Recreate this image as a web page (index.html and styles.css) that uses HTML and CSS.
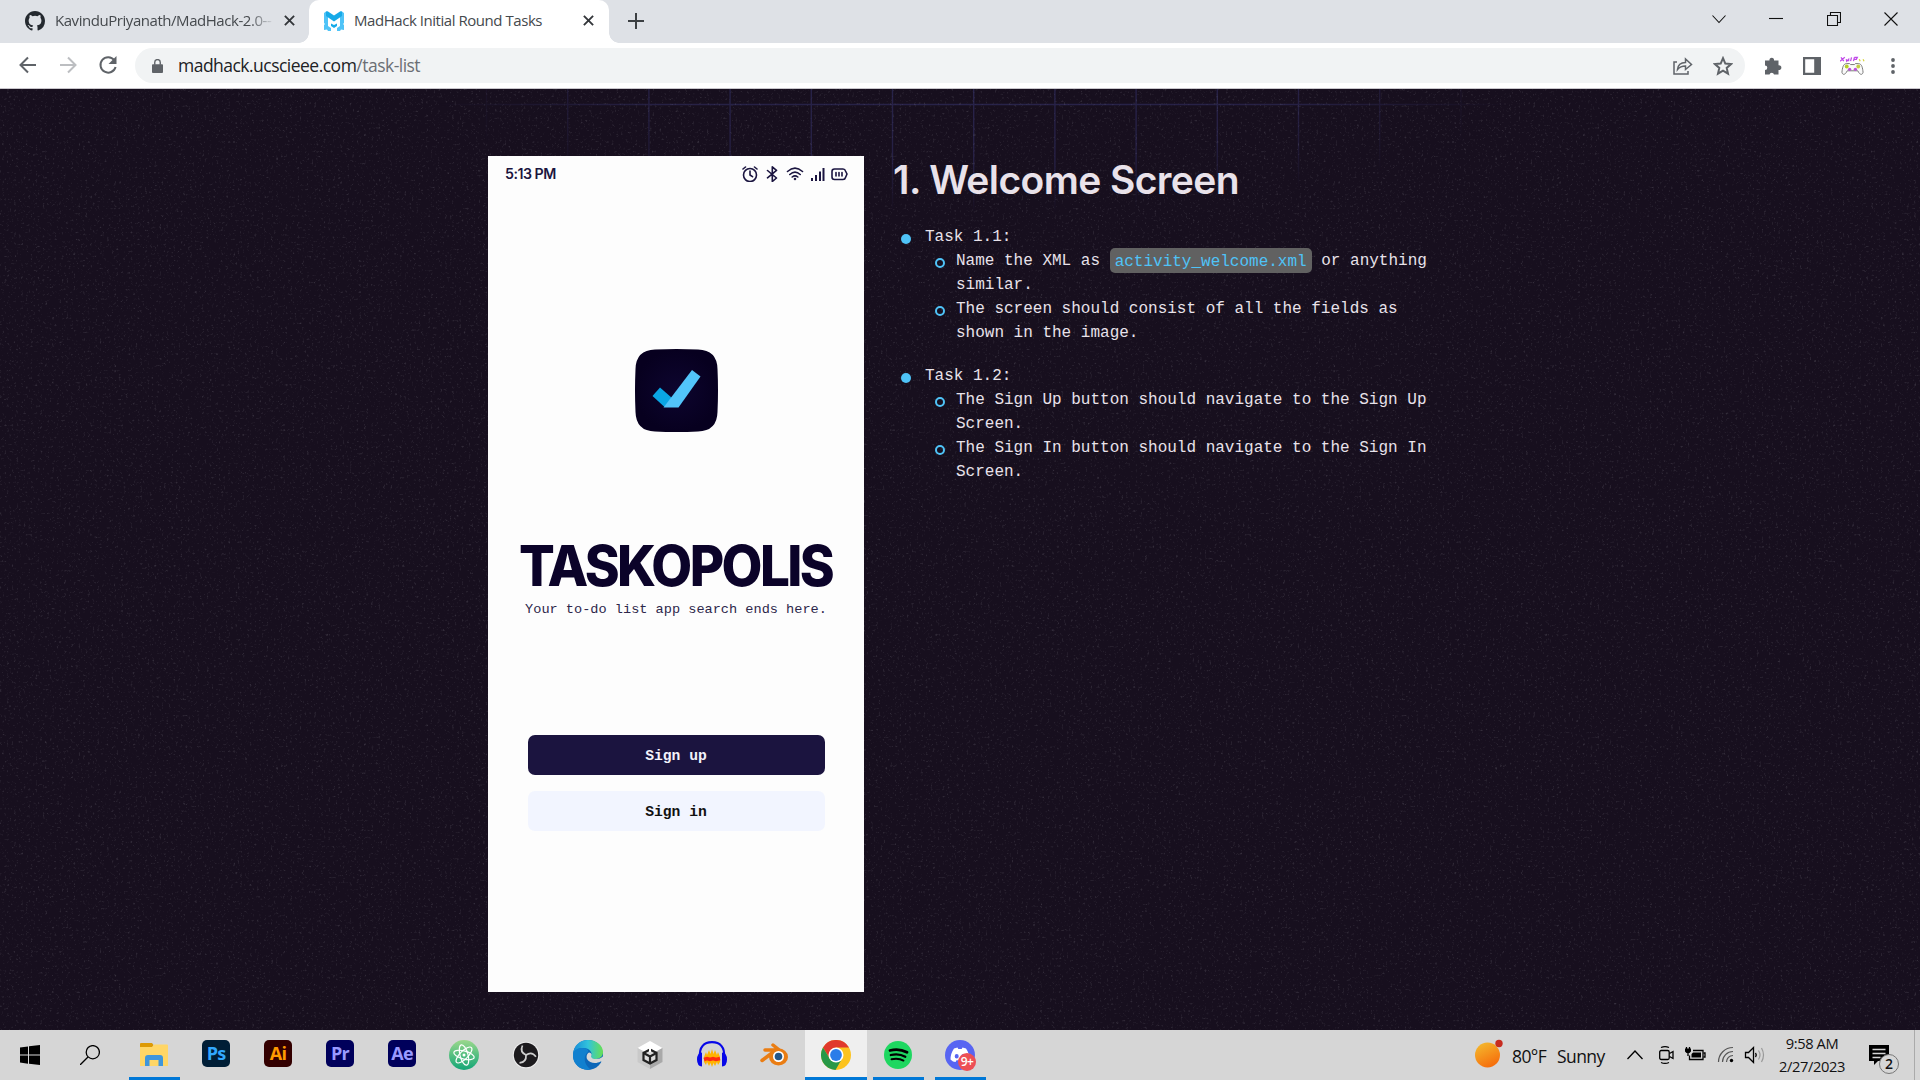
FILE: index.html
```
<!DOCTYPE html>
<html lang="en">
<head>
<meta charset="utf-8">
<title>MadHack Initial Round Tasks</title>
<link rel="stylesheet" href="styles.css">
</head>
<body>
<header class="browser">
  <div class="tabstrip">
    <div class="tab tab-idle">
      <svg class="fav" viewBox="0 0 16 16"><path fill="#24292f" d="M8 0C3.58 0 0 3.58 0 8c0 3.54 2.29 6.53 5.47 7.59.4.07.55-.17.55-.38v-1.49c-2.01.37-2.53-.49-2.69-.94-.09-.23-.48-.94-.82-1.13-.28-.15-.68-.52-.01-.53.63-.01 1.08.58 1.23.82.72 1.21 1.87.87 2.33.66.07-.52.28-.87.51-1.07-1.78-.2-3.64-.89-3.64-3.95 0-.87.31-1.59.82-2.15-.08-.2-.36-1.02.08-2.12 0 0 .67-.21 2.2.82a7.4 7.4 0 0 1 4 0c1.53-1.04 2.2-.82 2.2-.82.44 1.1.16 1.92.08 2.12.51.56.82 1.27.82 2.15 0 3.07-1.87 3.75-3.65 3.95.29.25.54.73.54 1.48v2.19c0 .21.15.46.55.38A8 8 0 0 0 16 8c0-4.42-3.58-8-8-8z"/></svg>
      <span class="tab-title faded">KavinduPriyanath/MadHack-2.0--</span>
      <svg class="tab-x" viewBox="0 0 10 10"><path d="M.8.8l8.4 8.4M9.2.8L.8 9.2"/></svg>
    </div>
    <div class="tab tab-active">
      <svg class="fav" viewBox="0 0 20 20"><path fill="#4fc3f7" d="M0 2l2-1.500h2V15l3 2v3H4l-1-1.500L0 19V14l1-1-1-1zM20 2l-2-1.500h-2V15l-3 2v3h3l1-1.500 3 .5v-5l-1-1 1-1z"/><path fill="#16aae8" d="M2 .5h2L10 4.500 16 .5h2V5l-8 5.500L2 5z"/><path fill="#16aae8" d="M7 12.500l3 1.500 3-1.500v2.500l-3 2-3-2z"/></svg>
      <span class="tab-title">MadHack Initial Round Tasks</span>
      <svg class="tab-x" viewBox="0 0 10 10"><path d="M.8.8l8.4 8.4M9.2.8L.8 9.2"/></svg>
    </div>
    <svg class="plus" viewBox="0 0 16 16"><path d="M8 0v16M0 8h16"/></svg>
    <div class="winctl">
      <svg viewBox="0 0 14 14"><path d="M.5 3.500l6.500 7 6.500-7"/></svg>
      <svg viewBox="0 0 14 14"><path d="M0 6.500h14"/></svg>
      <svg viewBox="0 0 14 14"><path d="M.5 3.500h10v10h-10zM3.500 3V.5h10v10H11"/></svg>
      <svg viewBox="0 0 14 14"><path d="M.5.5l13 13M13.500.5l-13 13"/></svg>
    </div>
  </div>
  <div class="toolbar">
    <div class="nav">
      <svg viewBox="0 0 20 20"><path d="M18 10H3M10 2.500L2.500 10l7.500 7.500"/></svg>
      <svg class="off" viewBox="0 0 20 20"><path d="M2 10h15M10 2.500l7.500 7.500-7.500 7.500"/></svg>
      <svg viewBox="0 0 20 20"><path d="M16.300 5.200A7.700 7.700 0 1 0 17.600 12"/><path class="solid" d="M18.500 1v8h-8z"/></svg>
    </div>
    <div class="omnibox">
      <svg class="lock" viewBox="0 0 12 15"><path fill="#5f6368" d="M1 5.500h10a1 1 0 0 1 1 1V14a1 1 0 0 1-1 1H1a1 1 0 0 1-1-1V6.500a1 1 0 0 1 1-1z"/><path fill="none" stroke="#5f6368" stroke-width="1.500" d="M3 6V3.500a3 3 0 0 1 6 0V6"/></svg>
      <span class="url">madhack.ucscieee.com<span class="path">/task-list</span></span>
      <svg class="share" viewBox="0 0 20 18"><path d="M4 5H1v12h14v-3M4.500 12.500c.5-5 3.500-7 8-7V2l6 5.500-6 5V9c-4 0-6 1-8 3.500z"/></svg>
      <svg class="star" viewBox="0 0 20 20"><path d="M10 2.200l2.300 5.400 5.700.5-4.300 3.800 1.300 5.700-5-3-5 3 1.300-5.700L2 8.100l5.700-.5z"/></svg>
    </div>
    <div class="exts">
      <svg class="puzzle" viewBox="0 0 18 18"><path fill="#5f6368" d="M1 3.500h4.500a2.300 2.300 0 1 1 4.500 0h4.500v4.800a2.400 2.400 0 1 1 0 4.700v4.500H10a2.300 2.300 0 0 0-4.500 0H1V13a2.300 2.300 0 0 0 0-4.600z"/></svg>
      <svg class="panel" viewBox="0 0 18 18"><path fill="#5f6368" fill-rule="evenodd" d="M0 0h18v18H0zM2.200 2.200v13.600h9V2.200z"/></svg>
      <svg class="pad" viewBox="0 0 26 20"><path fill="none" stroke="#c04ae8" stroke-width="1.300" d="M1 1l3 4M5 1L0 5M6.500 3l.5 2 2-2v2M12 1l-1 4M15 1l-1 4M15 1h3l-1 2h-2"/><path fill="none" stroke="#d9d640" stroke-width="1.300" d="M20 3l1 2M24 3l1 2"/><path fill="#fafafa" stroke="#777" d="M7 7.500h3l1 1h4l1-1h3c4 0 4.500 5 5 9-1 4-4 2-5.500-1.500h-11C6 18.500 3 20.500 2 16.500c.5-4 1-9 5-9z"/><circle cx="7" cy="10.500" r="2" fill="#b8cd27"/><circle cx="19" cy="10.500" r="2" fill="#c2cb46"/><circle cx="10" cy="13.500" r="1.700" fill="#bb52d6"/><circle cx="16" cy="13.500" r="1.700" fill="#bb52d6"/></svg>
      <svg class="dots" viewBox="0 0 4 16"><g fill="#5f6368"><circle cx="2" cy="2" r="1.900"/><circle cx="2" cy="8" r="1.900"/><circle cx="2" cy="14" r="1.900"/></g></svg>
    </div>
  </div>
</header>

<main class="page">
  <svg class="backdrop" width="1920" height="941">
    <defs>
      <filter id="grain" x="0" y="0" width="100%" height="100%"><feTurbulence type="fractalNoise" baseFrequency=".42" numOctaves="2" seed="4"/><feColorMatrix values="0 0 0 0 .5  0 0 0 0 .5  0 0 0 0 .54  1.800 0 0 0 -1.080"/></filter>
      <radialGradient id="fade" gradientUnits="userSpaceOnUse" cx="0" cy="0" r="1" gradientTransform="translate(974 0) scale(540 125)"><stop offset="0" stop-color="#fff"/><stop offset=".6" stop-color="#fff" stop-opacity=".85"/><stop offset="1" stop-color="#fff" stop-opacity="0"/></radialGradient>
      <mask id="gridmask" maskUnits="userSpaceOnUse" x="0" y="0" width="1920" height="130"><rect width="1920" height="130" fill="url(#fade)"/></mask>
    </defs>
    <path mask="url(#gridmask)" fill="none" stroke="#29244b" stroke-width="1.400" d="M400 15.500H1540M486.500 0V130M567.700 0V130M648.900 0V130M730.100 0V130M811.300 0V130M892.500 0V130M973.700 0V130M1054.900 0V130M1136.100 0V130M1217.300 0V130M1298.500 0V130M1379.700 0V130M1461 0V130"/>
    <rect width="1920" height="941" filter="url(#grain)" opacity=".34"/>
  </svg>
  <section class="phone">
    <div class="status">
      <span class="time">5:13 PM</span>
      <svg class="sicons" viewBox="0 0 106 16"><g fill="none" stroke="#1b1540" stroke-width="1.600" stroke-linecap="round" stroke-linejoin="round"><circle cx="8" cy="9" r="6.500"/><path d="M8 5v4l2.500 1.700M1 3l2.500-2M15 3l-2.500-2M25.500 4.500l9 7.500-4.200 3.500V.8l4.200 3.600-9 7.400M45.500 5.500q7.500-6.600 15 0M47.800 8.500q5.200-4.600 10.400 0M50.200 11q2.800-2.300 5.600 0"/><circle cx="53" cy="13" r=".5"/><path stroke-width="2" stroke-linecap="butt" d="M70 15v-3M74 15V9M78 15V5.500M81.500 15V2"/><path d="M92.500 3H101q2 0 2.500 2l1.500 3-1.500 3.500q-.5 2-2.500 2h-8.500Q90 13.500 90 11V5.500Q90 3 92.500 3z"/><path d="M94 6.500V10M97 6.500V10M100 6.500V10"/></g></svg>
    </div>
    <svg class="logo" viewBox="0 0 83 83"><defs><radialGradient id="lg"><stop stop-color="#0d052f"/><stop offset="1" stop-color="#07001f"/></radialGradient></defs><path fill="url(#lg)" d="M20 .5Q41.500-.5 63 .5Q82 1 82.500 20Q83.500 41.500 82.500 63Q82 82 63 82.500Q41.500 83.500 20 82.500Q1 82 .5 63Q-.5 41.500 .5 20Q1 1 20 .5z"/><path fill="#0aa6e4" d="M25 38.500l12 10.500-7.500 9L17.500 47z"/><path fill="#52c5fa" d="M57 21l8.500 6.500-22 31H28.500z"/></svg>
    <h2 class="brand">TASKOPOLIS</h2>
    <p class="tagline">Your to-do list app search ends here.</p>
    <div class="btn btn-up">Sign up</div>
    <div class="btn btn-in">Sign in</div>
  </section>
  <section class="tasks">
    <h1>1. Welcome Screen</h1>
    <ul class="outer">
      <li>Task 1.1:
        <ul class="inner">
          <li>Name the XML as <code>activity_welcome.xml</code> or anything<br>similar.</li>
          <li>The screen should consist of all the fields as<br>shown in the image.</li>
        </ul>
      </li>
      <li>Task 1.2:
        <ul class="inner">
          <li>The Sign Up button should navigate to the Sign Up<br>Screen.</li>
          <li>The Sign In button should navigate to the Sign In<br>Screen.</li>
        </ul>
      </li>
    </ul>
  </section>
</main>

<footer class="taskbar">
  <div class="cell start"><svg width="20" height="20" viewBox="0 0 20 20"><path d="M0 2.500l8-1.100v8.100H0zM9 1.300L20 0v9.500H9zM0 10.500h8v8.200l-8-1.100zM9 10.500h11V20L9 18.800z"/></svg></div>
  <div class="cell find"><svg width="20" height="20" viewBox="0 0 20 20"><g fill="none" stroke="#000" stroke-width="1.300"><circle cx="12.800" cy="7.200" r="6.600"/><path d="M8 12l-8 8"/></g></svg></div>
  <div class="cell open"><svg width="28" height="24" viewBox="0 0 28 24"><path fill="#dd9a05" d="M0 1q0-1 1-1h11l1.500 2-1.500 3H0z"/><path fill="#ffd666" d="M0 4h12l2.500-2.500H27q1 0 1 1V23H0z"/><path fill="#3f96dc" d="M5 23V15q0-3 3-3h12q3 0 3 3v8h-4.500v-6h-9v6z"/></svg></div>
  <div class="cell"><span class="adobe ps">Ps</span></div>
  <div class="cell"><span class="adobe ai">Ai</span></div>
  <div class="cell"><span class="adobe pr">Pr</span></div>
  <div class="cell"><span class="adobe ae">Ae</span></div>
  <div class="cell"><svg width="30" height="30" viewBox="0 0 30 30"><defs><linearGradient id="at" x2="0" y2="1"><stop stop-color="#9bd88c"/><stop offset="1" stop-color="#12a676"/></linearGradient></defs><circle cx="15" cy="15" r="15" fill="url(#at)"/><g fill="none" stroke="#fff" stroke-width="1.200"><ellipse cx="15" cy="15" rx="10.500" ry="4" transform="rotate(15 15 15)"/><ellipse cx="15" cy="15" rx="10.500" ry="4" transform="rotate(75 15 15)"/><ellipse cx="15" cy="15" rx="10.500" ry="4" transform="rotate(135 15 15)"/></g><circle cx="15" cy="15" r="1.500" fill="#fff"/></svg></div>
  <div class="cell"><svg width="28" height="28" viewBox="0 0 28 28"><circle cx="14" cy="14" r="13.300" fill="#eee"/><circle cx="14" cy="14" r="12.200" fill="#1d1b1e"/><g fill="none" stroke="#cfcfcf" stroke-width="1.700"><path d="M14 14Q7.500 11 10.500 4.500"/><path d="M14 14Q7.500 11 10.500 4.500" transform="rotate(120 14 14)"/><path d="M14 14Q7.500 11 10.500 4.500" transform="rotate(240 14 14)"/></g></svg></div>
  <div class="cell"><svg width="30" height="30" viewBox="0 0 30 30"><defs><linearGradient id="e1"><stop stop-color="#168bd8"/><stop offset=".5" stop-color="#32c3dc"/><stop offset="1" stop-color="#67e052"/></linearGradient></defs><circle cx="15" cy="15" r="15" fill="#0c67b8"/><path fill="url(#e1)" d="M0 14C1 5 7 0 15 0c9 0 15 6 15 12 0 5-4 7-8 7-3 0-5-1-4-2.500C20 13 17 8 10 8 5 8 1 11 0 14z"/><path fill="#1180cf" d="M0 14c1-4 5-6 9-6 5 0 7 2 6 4-6 5-3 14 3 17.500C8 31.500-1 24 0 14z"/><path fill="#d6d6d6" d="M16 12.500c2 0 3.500 2 2 4 .5 2 2.500 2.500 5 2.500 3 0 5.500-1 7.500-3v6l-3-.5c-4 2.500-11 2-13.500-2.500-1-2.500 0-5.500 2-6.500z"/></svg></div>
  <div class="cell"><svg width="26" height="28" viewBox="0 0 26 28"><path fill="#fff" d="M13 0l12.500 7L13 14 .5 7z"/><path fill="#c9c9c9" d="M.5 7L13 14v14L.5 21z"/><path fill="#a9a9a9" d="M25.500 7L13 14v14l12.500-7z"/><path fill="#ddd" stroke="#222" stroke-width="2.200" d="M13 8.500l6.500 3.500v7L13 22.500 6.500 19v-7z"/><path fill="none" stroke="#222" stroke-width="2.200" d="M6.500 12l6.500 3.500 6.500-3.500M13 15.500v7"/><path stroke="#fff" stroke-width="2" d="M13 5v6"/></svg></div>
  <div class="cell"><svg width="30" height="28" viewBox="0 0 30 28"><path fill="#ffb400" d="M7 16l2-5 1 3 2-5 1.500 4L15 8l1.500 5L18 9l2 5 1-3 2 5v5l-2 3-1-3-2 4-1.500-3L15 26l-1.500-4-1.500 3-2-4-1 3-2-3z"/><path fill="none" stroke="#ff2b12" stroke-width="3.500" d="M7 18.500l3-1 3 1 3-1 3 1 4-1"/><path fill="none" stroke="#0808e8" stroke-width="2.200" d="M3 16C2 6 7 1.200 15 1.200S28 6 27 16"/><path fill="#0808e8" d="M5 11.500v14Q0 25 0 18.500t5-7zM25 11.500v14q5-.5 5-7t-5-7z"/></svg></div>
  <div class="cell"><svg width="28" height="24" viewBox="0 0 28 24"><path fill="none" stroke="#ea7d13" stroke-width="3.500" stroke-linecap="round" stroke-linejoin="round" d="M2 17.500L16 7H5M13 2l10 8"/><ellipse cx="18.500" cy="14" rx="9.500" ry="8.500" fill="#ea7d13"/><circle cx="18.500" cy="13.500" r="5.500" fill="#fff"/><circle cx="18.500" cy="13.500" r="3.800" fill="#265787"/></svg></div>
  <div class="cell current"><svg width="30" height="30" viewBox="0 0 30 30"><circle cx="15" cy="15" r="15" fill="#fcc31e"/><path fill="#e0392c" d="M2 7.500A15 15 0 0 1 28 7.500H15L9 19z"/><path fill="#279847" d="M2 7.500L8.800 18.700 15 22l6-3.200L14.500 30A15 15 0 0 1 2 7.500z"/><circle cx="15" cy="15" r="7.500" fill="#fff"/><circle cx="15" cy="15" r="5.900" fill="#2b7de9"/></svg></div>
  <div class="cell open"><svg width="28" height="28" viewBox="0 0 28 28"><circle cx="14" cy="14" r="14" fill="#1ed760"/><path fill="none" stroke="#000" stroke-linecap="round" stroke-width="2.800" d="M6 9.500q9-2.500 17 1.800"/><path fill="none" stroke="#000" stroke-linecap="round" stroke-width="2.300" d="M6.800 14q8-2 14.500 1.700"/><path fill="none" stroke="#000" stroke-linecap="round" stroke-width="1.900" d="M7.500 18.200q7-1.500 12 1.400"/></svg></div>
  <div class="cell open"><div class="discord"><svg width="30" height="30" viewBox="0 0 30 30"><circle cx="15" cy="15" r="15" fill="#5865f2"/><path fill="#fff" fill-rule="evenodd" d="M9 8.500l3.500-1 .8 1.500h3.400l.8-1.500 3.500 1q3.500 5 3.500 11-2.500 2.500-5 2.500l-1-1.700h-7L10.500 22q-2.500 0-5-2.500 0-6 3.500-11zm2.700 5.500a2 2.200 0 1 0 0 4.400 2 2.200 0 0 0 0-4.400zm6.600 0a2 2.200 0 1 0 0 4.400 2 2.200 0 0 0 0-4.400z"/></svg><span class="nine">9+</span></div></div>
  <div class="tray">
    <svg class="sun" width="28" height="30" viewBox="0 0 28 30"><defs><linearGradient id="sn" x1=".2" x2=".7" y2="1"><stop stop-color="#f4b92e"/><stop offset="1" stop-color="#f66a0a"/></linearGradient></defs><circle cx="12.500" cy="17" r="12.500" fill="url(#sn)"/><circle cx="24" cy="5.500" r="3.700" fill="#c72c20"/></svg>
    <span class="temp">80°F</span><span class="sky">Sunny</span>
    <svg class="up" width="16" height="10" viewBox="0 0 16 10"><path fill="none" stroke="#000" stroke-width="1.300" d="M.5 9L8 1l7.500 8"/></svg>
    <svg class="sys" width="106" height="20" viewBox="0 0 106 20"><g fill="none" stroke="#000" stroke-width="1.300"><rect x=".7" y="5.500" width="9.500" height="9" rx="1.500"/><path d="M10.500 8.500l3.500-2v7l-3.500-2M2 2.500q4-1.800 8 0M2 17.500q4 1.800 8 0"/><path d="M34 5.500h10v9H30.500v-4"/><path d="M44.500 8h1.500v4h-1.500"/><path d="M27.500 2v2M30.500 2v2M29 7v4"/></g><path d="M26 3.500h6v3L30.500 8h-3L26 6.500zM34 7.500h8v5h-9.500V9z"/><g fill="none" stroke="#555" stroke-width="1.200"><path d="M59.500 17A14.500 14.500 0 0 1 74 2.500M63.500 17A10.500 10.500 0 0 1 74 6.500M67.500 17A6.500 6.500 0 0 1 74 10.500"/></g><circle cx="72.500" cy="15.500" r="1.700"/><path fill="none" stroke="#000" stroke-width="1.300" d="M86.500 7.500h3l5-5v15l-5-5h-3zM96.500 8q1.500 2 0 4"/><path fill="none" stroke="#999" stroke-width="1.200" d="M99.500 5.500q3 4.500 0 9M102.500 3q4 7 0 14"/></svg>
    <div class="clock"><span>9:58 AM</span><span>2/27/2023</span></div>
    <div class="notes"><svg width="20" height="20" viewBox="0 0 20 20"><path d="M0 0h20v16H9l-4 4v-4H0z"/><path stroke="#d6d6d6" stroke-width="1.500" d="M3.500 4.500h13M3.500 8.500h13M3.500 12.500h8"/></svg><span class="count">2</span></div>
    <span class="peek"></span>
  </div>
</footer>
</body>
</html>
```
FILE: styles.css
```
*, *::before, *::after { box-sizing: border-box; }
body { margin: 0; width: 1920px; height: 1080px; overflow: hidden; display: flex; flex-direction: column; font-family: "Open Sans", "Noto Sans", sans-serif; background: #170f1e; }
svg { display: block; flex: none; }

.browser { height: 89px; flex: none; background: #fff; border-bottom: 1px solid #c9c6cc; }
.tabstrip { height: 43px; display: flex; align-items: center; background: #dee1e6; }
.tab { height: 43px; display: flex; align-items: center; padding-bottom: 2px; }
.tab-idle { width: 309px; padding-left: 25px; }
.tab-active { width: 300px; padding-left: 15px; background: #fff; border-radius: 10px 10px 0 0; position: relative; }
.tab-active::before, .tab-active::after { content: ""; position: absolute; bottom: 0; width: 10px; height: 10px; }
.tab-active::before { left: -10px; background: radial-gradient(circle at 0 0, transparent 9.500px, #fff 10px); }
.tab-active::after { right: -10px; background: radial-gradient(circle at 100% 0, transparent 9.500px, #fff 10px); }
.fav { width: 20px; height: 20px; margin-right: 10px; }
.tab-title { width: 220px; font-size: 15px; letter-spacing: -.45px; color: #45494d; white-space: nowrap; overflow: hidden; margin-bottom: 2px; }
.faded { -webkit-mask-image: linear-gradient(90deg, #000 88%, transparent 100%); mask-image: linear-gradient(90deg, #000 88%, transparent 100%); }
.tab-x { width: 11px; height: 11px; margin-left: 9px; stroke: #33363a; stroke-width: 1.700; }
.plus { width: 16px; height: 16px; margin-left: 19px; margin-bottom: 1px; stroke: #3c4043; stroke-width: 2; }
.winctl { margin-left: auto; margin-right: 22px; margin-bottom: 6px; display: flex; gap: 43.500px; }
.winctl svg { width: 14px; height: 14px; fill: none; stroke: #111; stroke-width: 1.100; }

.toolbar { height: 45px; display: flex; align-items: center; }
.nav { width: 135px; display: flex; gap: 20px; padding: 0 0 2px 18px; }
.nav svg { width: 20px; height: 20px; fill: none; stroke: #5f6368; stroke-width: 2; }
.nav .off { stroke: #bcbec1; }
.nav .solid { fill: #5f6368; stroke: none; }
.omnibox { width: 1610px; height: 35px; border-radius: 18px; background: #f1f3f4; display: flex; align-items: center; padding: 0 15px 0 17px; }
.lock { width: 11px; height: 14px; margin-right: 15px; }
.url { font-size: 17.500px; letter-spacing: -.52px; color: #202124; white-space: nowrap; padding-bottom: 1px; }
.path { color: #6b6f74; }
.share { width: 20px; height: 18px; margin-left: auto; margin-right: 20px; fill: none; stroke: #5f6368; stroke-width: 1.500; }
.star { width: 20px; height: 20px; margin-right: -3px; fill: none; stroke: #5f6368; stroke-width: 2; }
.exts { display: flex; align-items: center; padding-left: 19px; }
.puzzle { width: 18px; height: 18px; }
.panel { width: 18px; height: 18px; margin-left: 21px; }
.pad { width: 25px; height: 20px; margin-left: 19px; }
.dots { width: 4px; height: 16px; margin-left: 26px; }

.page { height: 941px; flex: none; position: relative; display: flex; padding: 67px 0 0 488px; background: #170f1e; }
.backdrop { position: absolute; left: 0; top: 0; }
.phone { position: relative; width: 376px; height: 836px; background: #fdfdfd; display: flex; flex-direction: column; align-items: center; }
.status { width: 100%; height: 36px; padding: 0 16px 0 17px; display: flex; align-items: center; justify-content: space-between; }
.time { font: 600 14.200px "Inter", sans-serif; letter-spacing: -.5px; color: #1b1540; padding-bottom: 1px; }
.sicons { width: 106px; height: 16px; }
.logo { width: 83px; height: 83px; margin-top: 156.500px; }
.brand { margin: 100.500px 0 0; height: 68px; font: 800 56px/68px "Inter", sans-serif; letter-spacing: -2.700px; color: #0b0329; white-space: nowrap; transform: scaleX(.945); }
.tagline { margin: 0; height: 20px; font: 13.600px/20px "Liberation Mono", monospace; color: #2d274b; white-space: nowrap; }
.btn { width: 297px; height: 40px; border-radius: 7px; padding-top: 1px; font: bold 14.700px/40px "Liberation Mono", monospace; text-align: center; }
.btn-up { margin-top: 115px; background: #1b143f; color: #f3f2fa; }
.btn-in { margin-top: 16px; background: #f2f5ff; color: #111; }

.tasks { position: relative; padding-left: 29px; color: #e8e2ea; }
.tasks h1 { margin: -1px 0 0; height: 50px; font: 600 39px/50px "Inter", sans-serif; letter-spacing: -.6px; white-space: nowrap; color: #e9e2ea; }
.tasks ul { list-style: none; margin: 0; padding: 0; }
.tasks li { position: relative; }
.tasks .outer { padding-left: 32px; margin-top: 20px; font: 16px/24px "Liberation Mono", monospace; }
.outer > li { margin-bottom: 19px; }
.inner li { margin-left: 31px; }
.outer li::before { content: ""; position: absolute; left: -24px; top: 9px; width: 10px; height: 10px; border-radius: 50%; background: #4fc3f7; }
.outer .inner li::before { left: -21px; border: 2px solid #4fc3f7; background: none; }
.tasks code { font: 16px/18px "Liberation Mono", monospace; color: #4fc3f7; background: #616161; border-radius: 5px; padding: 5px 5px 2px; vertical-align: -1px; }

.taskbar { height: 50px; flex: none; display: flex; background: #d6d6d6; }
.cell { width: 62px; height: 50px; display: flex; align-items: center; justify-content: center; position: relative; }
.start { width: 60px; }
.find { width: 63px; padding-right: 3px; }
.open::after, .current::after { content: ""; position: absolute; bottom: 0; left: 6px; width: 51px; height: 3px; background: #0078d7; }
.current { background: #efefef; }
.current::after { left: 0; width: 62px; }
.adobe { width: 28px; height: 27px; margin-bottom: 3px; border-radius: 5px; font: 700 18px/26px "Open Sans", sans-serif; letter-spacing: -.8px; text-align: center; }
.ps { background: #001e36; color: #31a8ff; }
.ai { background: #330000; color: #ff9a00; }
.pr, .ae { background: #00005b; color: #9999ff; }
.discord { position: relative; }
.nine { position: absolute; left: 13px; top: 13px; width: 18px; height: 18px; border-radius: 50%; background: #ed4f55; color: #fff; font-size: 12px; font-weight: 600; line-height: 17px; text-align: center; letter-spacing: -.5px; }
.tray { margin-left: auto; width: 445px; height: 50px; display: flex; align-items: center; color: #111; }
.sun { margin-top: -4px; }
.temp, .sky { font-size: 17.500px; letter-spacing: -.6px; padding-top: 2px; white-space: nowrap; }
.temp { width: 45px; margin-left: 9px; }
.sky { width: 70px; }
.up { margin-right: 16px; }
.clock { width: 94px; display: flex; flex-direction: column; align-items: center; font-size: 14.700px; line-height: 23px; letter-spacing: -.4px; padding-bottom: 1px; }
.notes { position: relative; margin-left: 10px; }
.count { position: absolute; left: 10px; top: 9px; width: 20px; height: 20px; border: 1px solid #777; border-radius: 50%; background: #d6d6d6; font-size: 14px; font-weight: 600; line-height: 18px; text-align: center; }
.peek { width: 1px; height: 50px; margin-left: 25px; background: #aaa; }
```
